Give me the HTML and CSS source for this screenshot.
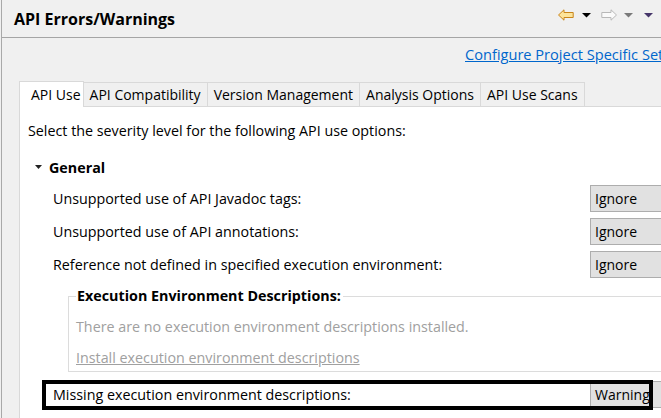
FILE: index.html
```html
<!DOCTYPE html>
<html>
<head>
<meta charset="utf-8">
<link rel="stylesheet" href="styles.css">
</head>
<body>
<div class="frame">
  <div class="header">
    <h1 class="title">API Errors/Warnings</h1>
    <div class="tools">
      <svg class="ico arrow" width="16" height="12" viewBox="0 0 16 12"><path d="M0.5 6 L6 0.8 L6 3.5 L15.2 3.5 L15.2 8.5 L6 8.5 L6 11.2 Z" fill="#fde49a" stroke="#c9851b" stroke-width="1"/></svg>
      <svg class="ico tri" width="9" height="5" viewBox="0 0 9 5"><path d="M0 0 H9 L4.5 4.5 Z" fill="#000"/></svg>
      <svg class="ico arrow fwd" width="16" height="12" viewBox="0 0 16 12"><path d="M15.5 6 L10 0.8 L10 3.5 L0.8 3.5 L0.8 8.5 L10 8.5 L10 11.2 Z" fill="#fafafa" stroke="#b8b8b8" stroke-width="1"/></svg>
      <svg class="ico tri gray" width="9" height="5" viewBox="0 0 9 5"><path d="M0 0 H9 L4.5 4.5 Z" fill="#7a7a7a"/></svg>
      <svg class="ico tri last" width="9" height="5" viewBox="0 0 9 5"><path d="M0 0 H9 L4.5 4.5 Z" fill="#46366a"/></svg>
    </div>
  </div>
  <div class="linkrow"><a class="link">Configure Project Specific Settings...</a></div>
  <div class="tabs">
    <div class="tab active">API Use</div>
    <div class="tab">API Compatibility</div>
    <div class="tab">Version Management</div>
    <div class="tab">Analysis Options</div>
    <div class="tab">API Use Scans</div>
    <div class="tabfill"></div>
  </div>
  <div class="panel">
    <p class="intro">Select the severity level for the following API use options:</p>
    <div class="section">
      <svg class="caret" width="7" height="4" viewBox="0 0 7 4"><path d="M0 0 H7 L3.5 4 Z" fill="#222"/></svg>
      <span class="section-title">General</span>
    </div>
    <div class="row first"><span class="label">Unsupported use of API Javadoc tags:</span><div class="combo">Ignore</div></div>
    <div class="row"><span class="label">Unsupported use of API annotations:</span><div class="combo">Ignore</div></div>
    <div class="row"><span class="label">Reference not defined in specified execution environment:</span><div class="combo">Ignore</div></div>
    <fieldset class="group">
      <legend class="legend">Execution Environment Descriptions:</legend>
      <p class="muted first-muted">There are no execution environment descriptions installed.</p>
      <p class="muted link-muted">Install execution environment descriptions</p>
    </fieldset>
    <div class="row last-row"><span class="label">Missing execution environment descriptions:</span><div class="combo">Warning</div><div class="highlight"></div></div>
  </div>
</div>
</body>
</html>
```
FILE: styles.css
```css
html, body {
  margin: 0;
  padding: 0;
}
body {
  width: 661px;
  height: 418px;
  overflow: hidden;
  background: #f0f0f0;
  font-family: "Open Sans", "Noto Sans", sans-serif;
  font-size: 14.3px;
  color: #000;
}
.frame {
  margin-left: 1px;
  border-left: 1px solid #a9a9a9;
  height: 418px;
  display: flex;
  flex-direction: column;
}
.header {
  height: 38px;
  border-bottom: 1px solid #a5a5a5;
  display: flex;
  align-items: flex-start;
  justify-content: space-between;
  box-sizing: border-box;
}
.title {
  margin: 0;
  padding: 9px 0 0 12px;
  font-size: 16px;
  font-weight: 700;
  line-height: 20px;
}
.tools {
  display: flex;
  align-items: center;
  padding-top: 9px;
  height: 12px;
}
.ico { display: block; }
.arrow { margin-right: 8px; }
.fwd { margin-left: 10px; margin-right: 7px; }
.tri { margin-top: 1px; }
.last { margin-left: 11px; margin-right: 8px; }
.linkrow {
  height: 43px;
  padding-left: 463px;
  white-space: nowrap;
  overflow: hidden;
  box-sizing: border-box;
  padding-top: 6px;
}
.link {
  color: #0066cc;
  text-decoration: underline;
  font-size: 14.6px;
  line-height: 20px;
}
.tabs {
  display: flex;
  align-items: flex-end;
  height: 26px;
  padding-left: 17px;
  font-size: 14px;
}
.tab {
  height: 25px;
  box-sizing: border-box;
  padding: 0 6px;
  border: 1px solid #d9d9d9;
  border-left: none;
  line-height: 23px;
  white-space: nowrap;
  background: #f0f0f0;
}
.tab.active {
  height: 26px;
  background: #fff;
  border-left: 1px solid #d9d9d9;
  border-bottom: none;
  padding: 0 2px 0 11px;
  line-height: 25px;
}
.tabfill {
  flex: 1;
  border-bottom: 1px solid #d9d9d9;
}
.panel {
  flex: 1;
  margin-left: 17px;
  background: #fff;
  border-left: 1px solid #d9d9d9;
  padding-left: 8px;
  padding-top: 14px;
}
.intro {
  margin: 0;
  line-height: 20px;
}
.section {
  display: flex;
  align-items: center;
  margin-top: 16px;
  height: 20px;
  padding-left: 7px;
}
.caret { margin-right: 7px; }
.section-title {
  font-weight: 700;
}
.row {
  display: flex;
  align-items: center;
  justify-content: space-between;
  height: 27px;
  margin-top: 6px;
  padding-left: 25px;
  position: relative;
}
.row.first { margin-top: 8px; }
.combo {
  width: 90px;
  height: 27px;
  box-sizing: border-box;
  margin-right: -19px;
  background: #e1e1e1;
  border: 1px solid #adadad;
  padding-left: 4px;
  line-height: 25px;
  font-size: 14px;
  flex-shrink: 0;
}
.group {
  margin: 8px -20px 0 40px;
  padding: 0 0 3px 7px;
  border: 1px solid #dcdcdc;
  border-right: none;
  min-width: 0;
}
.legend {
  font-weight: 700;
  padding: 0 2px 0 1px;
  line-height: 20px;
}
.muted {
  margin: 0;
  color: #a0a0a0;
  line-height: 20px;
}
.first-muted { margin-top: 11px; }
.link-muted {
  margin-top: 11px;
  text-decoration: underline;
}
.last-row {
  margin-top: 9px;
}
.highlight {
  position: absolute;
  left: 14px;
  top: -1px;
  width: 611px;
  height: 30px;
  border: 4px solid #000;
  box-sizing: border-box;
  pointer-events: none;
}
```
